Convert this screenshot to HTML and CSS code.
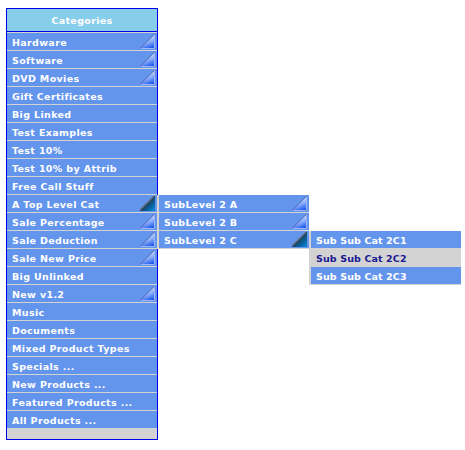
FILE: index.html
```
<!DOCTYPE html>
<html lang="en">
<head>
<meta charset="utf-8">
<title>Categories</title>
<link rel="stylesheet" href="styles.css">
</head>
<body>
<svg class="defs" width="0" height="0" aria-hidden="true">
  <defs>
    <linearGradient id="light" x1="0.3" y1="0" x2="0.7" y2="1"><stop offset="0.2" stop-color="#d4e2fc"/><stop offset="0.55" stop-color="#8fb0f9"/><stop offset="1" stop-color="#1450ec"/></linearGradient>
    <linearGradient id="dark" x1="0" y1="0" x2="1" y2="1"><stop offset="0.5" stop-color="#1c4560"/><stop offset="0.7" stop-color="#07609c"/><stop offset="0.9" stop-color="#0880c8"/></linearGradient>
    <symbol id="arrow" viewBox="0 0 15 15"><path d="M0 15L15 0V15Z" fill="url(#light)"/><path d="M0 14.5L14.5 0" stroke="#5064ac" stroke-width=".9"/><path d="M1 14.5H14.5V1" fill="none" stroke="#9ab6f8" stroke-width="1"/></symbol>
    <symbol id="arrow-open" viewBox="0 0 15 15"><path d="M0 15V14L14 0H15V15Z" fill="url(#dark)"/><path d="M0 14L14 0" stroke="#656f80" stroke-width="1.3"/></symbol>
  </defs>
</svg>
<nav class="menu">
  <h1 class="title">Categories</h1>
  <ul class="list">
    <li class="item">Hardware<svg class="icon"><use href="#arrow"/></svg></li>
    <li class="item">Software<svg class="icon"><use href="#arrow"/></svg></li>
    <li class="item">DVD Movies<svg class="icon"><use href="#arrow"/></svg></li>
    <li class="item">Gift Certificates</li>
    <li class="item">Big Linked</li>
    <li class="item">Test Examples</li>
    <li class="item">Test 10%</li>
    <li class="item">Test 10% by Attrib</li>
    <li class="item">Free Call Stuff</li>
    <li class="item">A Top Level Cat<svg class="icon"><use href="#arrow-open"/></svg>
      <ul class="list submenu">
        <li class="item">SubLevel 2 A<svg class="icon"><use href="#arrow"/></svg></li>
        <li class="item">SubLevel 2 B<svg class="icon"><use href="#arrow"/></svg></li>
        <li class="item">SubLevel 2 C<svg class="icon"><use href="#arrow-open"/></svg>
          <ul class="list submenu">
            <li class="item">Sub Sub Cat 2C1</li>
            <li class="item current">Sub Sub Cat 2C2</li>
            <li class="item">Sub Sub Cat 2C3</li>
          </ul>
        </li>
      </ul>
    </li>
    <li class="item">Sale Percentage<svg class="icon"><use href="#arrow"/></svg></li>
    <li class="item">Sale Deduction<svg class="icon"><use href="#arrow"/></svg></li>
    <li class="item">Sale New Price<svg class="icon"><use href="#arrow"/></svg></li>
    <li class="item">Big Unlinked</li>
    <li class="item">New v1.2<svg class="icon"><use href="#arrow"/></svg></li>
    <li class="item">Music</li>
    <li class="item">Documents</li>
    <li class="item">Mixed Product Types</li>
    <li class="item">Specials ...</li>
    <li class="item">New Products ...</li>
    <li class="item">Featured Products ...</li>
    <li class="item">All Products ...</li>
  </ul>
</nav>
</body>
</html>
```
FILE: styles.css
```
* { box-sizing: border-box; }
body {
  margin: 0;
  padding: 8px 0 0 6px;
  background: #fff;
  font: bold 9.5px/19px "DejaVu Sans", Verdana, sans-serif;
  letter-spacing: 0.35px;
  overflow: hidden;
}
.defs { position: absolute; }
.menu {
  width: 152px;
  height: 432px;
  border: 1px solid #0000e8;
  background: #d3d3d3;
}
.title {
  margin: 0;
  height: 23px;
  border-bottom: 1px solid #0000e8;
  background: #87ceeb;
  color: #fff;
  font-size: 9.5px;
  line-height: 24px;
  text-align: center;
}
.list { margin: 0; padding: 1px 0 0; list-style: none; }
.item {
  position: relative;
  display: flex;
  justify-content: space-between;
  height: 18px;
  padding: 0 2px 0 5px;
  border-bottom: 1px solid #d3d3d3;
  background: #6495ed;
  color: #fff;
  white-space: nowrap;
}
.item:last-child { height: 17px; border-bottom: 0; }
.icon { flex: none; width: 15px; height: 15px; margin-top: 1px; }
.submenu {
  position: absolute;
  z-index: 1;
  top: 0;
  left: 150px;
  width: 152px;
  padding: 0 0 1px 2px;
  background: #d3d3d3;
}
.submenu .submenu { letter-spacing: 0.12px; }
.current { background: #d3d3d3; color: #191991; }
```
